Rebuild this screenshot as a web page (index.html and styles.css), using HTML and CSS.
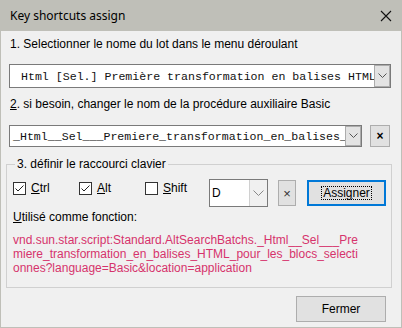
FILE: index.html
```html
<!DOCTYPE html>
<html>
<head>
<meta charset="utf-8">
<link rel="stylesheet" href="styles.css">
</head>
<body>
<div class="window">
  <div class="titlebar">
    <span class="title">Key shortcuts assign</span>
    <svg class="close" width="12" height="12" viewBox="0 0 12 12"><path d="M1 1 L11 11 M11 1 L1 11" stroke="#111" stroke-width="1.1" fill="none"/></svg>
  </div>
  <div class="content">
    <div class="label label1">1. Selectionner le nome du lot dans le menu déroulant</div>
    <div class="combo combo1">
      <span class="combo-text">Html [Sel.] Première transformation en balises HTML</span>
      <span class="drop"><svg width="9" height="6" viewBox="0 0 9 6"><path d="M0.5 0.5 L4.5 4.5 L8.5 0.5" stroke="#555" fill="none"/></svg></span>
    </div>
    <div class="label label2"><u>2</u>. si besoin, changer le nom de la procédure auxiliaire Basic</div>
    <div class="row2">
      <div class="combo combo2">
        <span class="combo-text">_Html__Sel___Premiere_transformation_en_balises_</span>
        <span class="drop"><svg width="9" height="6" viewBox="0 0 9 6"><path d="M0.5 0.5 L4.5 4.5 L8.5 0.5" stroke="#555" fill="none"/></svg></span>
      </div>
      <button class="btn xbtn bold">×</button>
    </div>
    <fieldset class="group">
      <legend>3. définir le raccourci clavier</legend>
      <div class="keys">
        <label class="check c1"><svg width="13" height="13" viewBox="0 0 13 13"><rect x="0.5" y="0.5" width="12" height="12" fill="#fff" stroke="#333"/><path d="M2.5 6.5 L5 9 L10.5 3.5" stroke="#222" fill="none"/></svg><span><u>C</u>trl</span></label>
        <label class="check c2"><svg width="13" height="13" viewBox="0 0 13 13"><rect x="0.5" y="0.5" width="12" height="12" fill="#fff" stroke="#333"/><path d="M2.5 6.5 L5 9 L10.5 3.5" stroke="#222" fill="none"/></svg><span><u>A</u>lt</span></label>
        <label class="check c3"><svg width="13" height="13" viewBox="0 0 13 13"><rect x="0.5" y="0.5" width="12" height="12" fill="#fff" stroke="#333"/></svg><span><u>S</u>hift</span></label>
        <div class="keycombo">
          <span class="key">D</span>
          <span class="keydrop"><svg width="11" height="7" viewBox="0 0 11 7"><path d="M0.5 0.5 L5.5 5.5 L10.5 0.5" stroke="#888" fill="none"/></svg></span>
        </div>
        <button class="btn xbtn2">×</button>
        <button class="btn assign"><span class="focus">Assi<u>g</u>ner</span></button>
      </div>
      <div class="used"><u>U</u>tilisé comme fonction:</div>
      <div class="func">vnd.sun.star.script:Standard.AltSearchBatchs._Html__Sel___Pre<br>miere_transformation_en_balises_HTML_pour_les_blocs_selecti<br>onnes?language=Basic&amp;location=application</div>
    </fieldset>
    <div class="footer">
      <button class="btn close-btn">Fermer</button>
    </div>
  </div>
</div>
</body>
</html>
```

FILE: styles.css
```css
* { box-sizing: border-box; }
html, body { margin: 0; padding: 0; }
body {
  font-family: "Liberation Sans", Arial, sans-serif;
  font-size: 12px;
  color: #000;
  background: #f0f0f0;
}
.window {
  width: 402px;
  height: 328px;
  background: #f0f0f0;
  border: 1px solid #bfbfb8;
  border-top: none;
  overflow: hidden;
}
.titlebar {
  height: 31px;
  margin: 0 -1px;
  background: #bfbfb8;
  display: flex;
  align-items: center;
  justify-content: space-between;
  padding: 0 10px 0 10px;
}
.title {
  font-family: "Noto Sans", "Open Sans", sans-serif;
  font-size: 12px;
  color: #000;
  margin-top: -1px;
}
.content { padding-top: 6px; }
.label { line-height: 14px; height: 14px; }
.label1 { margin-left: 9px; }
.label2 { margin: 9px 0 0 9px; }
.combo {
  display: flex;
  align-items: stretch;
  background: #fff;
  border: 1px solid #7a7a7a;
  overflow: hidden;
}
.combo-text {
  flex: 1;
  min-width: 0;
  font-family: "Liberation Mono", "Courier New", monospace;
  font-size: 11.6px;
  white-space: nowrap;
  overflow: hidden;
  display: flex;
  align-items: center;
  color: #111;
}
.drop {
  width: 16px;
  flex: none;
  background: #e3e3e3;
  border: 1px solid #acacac;
  display: flex;
  align-items: center;
  justify-content: center;
}
.combo1 {
  margin: 13px 0 0 8px;
  width: 382px;
  height: 24px;
}
.combo1 .combo-text { padding-left: 11px; }
.row2 {
  display: flex;
  margin-top: 14px;
}
.combo2 {
  margin-left: 8px;
  width: 353px;
  height: 22px;
}
.combo2 .combo-text { padding-left: 3px; }
.btn {
  font-family: "Liberation Sans", Arial, sans-serif;
  font-size: 12px;
  background: #e1e1e1;
  border: 1px solid #adadad;
  padding: 0;
  color: #000;
  display: flex;
  align-items: center;
  justify-content: center;
}
.xbtn {
  margin-left: 8px;
  width: 20px;
  height: 22px;
  font-size: 12px;
}
.bold { font-weight: bold; }
.group {
  margin: 10px 0 0 5px;
  width: 386px;
  border: 1px solid #d0d0d0;
  padding: 8px 3px 12px 6px;
}
.group legend {
  padding: 0 2px;
  margin-left: 2px;
  line-height: 14px;
}
.keys {
  display: flex;
  align-items: flex-start;
  height: 28px;
}
.check {
  display: flex;
  align-items: center;
  gap: 5px;
  margin-top: 3px;
  height: 13px;
  line-height: 13px;
}
.check svg { flex: none; }
.c1, .c2 { width: 66px; }
.c3 { width: 64px; }
.keycombo {
  width: 59px;
  height: 28px;
  border: 1px solid #7a7a7a;
  background: #fff;
  display: flex;
}
.key {
  flex: 1;
  padding-left: 2px;
  display: flex;
  align-items: center;
}
.keydrop {
  width: 18px;
  border-left: 1px solid #d0d0d0;
  background: #f0f0f0;
  display: flex;
  align-items: center;
  justify-content: center;
}
.xbtn2 {
  width: 18px;
  height: 26px;
  margin: 1px 0 0 10px;
  font-size: 13px;
  color: #333;
}
.assign {
  width: 79px;
  height: 26px;
  margin: 1px 0 0 11px;
  border: 2px solid #0078d7;
}
.focus {
  border: 1px dotted #000;
  padding: 0 1px;
  line-height: 12px;
}
.used {
  margin-top: 3px;
  line-height: 14px;
}
.func {
  margin-top: 9px;
  line-height: 14px;
  color: #d6336c;
  white-space: nowrap;
}
.footer {
  display: flex;
  justify-content: flex-end;
  padding-right: 15px;
  margin-top: 8px;
}
.close-btn {
  width: 90px;
  height: 26px;
}
```
